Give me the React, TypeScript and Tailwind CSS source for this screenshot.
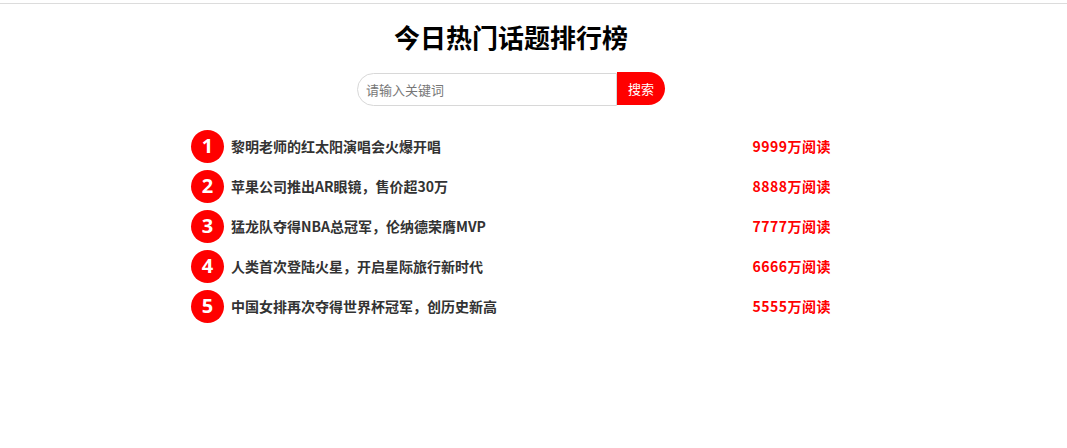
import React from 'react'

const topics = [
  { title: '黎明老师的红太阳演唱会火爆开唱', reads: '9999万阅读' },
  { title: '苹果公司推出AR眼镜，售价超30万', reads: '8888万阅读' },
  { title: '猛龙队夺得NBA总冠军，伦纳德荣膺MVP', reads: '7777万阅读' },
  { title: '人类首次登陆火星，开启星际旅行新时代', reads: '6666万阅读' },
  { title: '中国女排再次夺得世界杯冠军，创历史新高', reads: '5555万阅读' },
]

export default function App() {
  return (
    <div className="min-h-screen bg-white font-['Noto_Sans_CJK_SC',sans-serif] text-[#333]">
      <div className="pt-[3px]">
        <div className="border-t border-[#dcdcdc]" />
      </div>
      <div className="w-[1022px]">
        <h1 className="mt-[17px] text-center text-[26px] font-bold leading-8 text-black">
          今日热门话题排行榜
        </h1>
        <form className="mt-[20px] flex justify-center items-start" onSubmit={(e) => e.preventDefault()}>
          <input
            className="h-[33px] w-[260px] rounded-l-full border border-[#d8d8d8] px-2 text-[13px] outline-none placeholder:text-[#777]"
            placeholder="请输入关键词"
          />
          <button
            type="submit"
            className="-mt-px h-[33px] w-[48px] rounded-r-full bg-[#ff0000] text-[13px] text-white"
          >
            搜索
          </button>
        </form>
        <ul className="mx-auto mt-[20px] w-[640px]">
          {topics.map((t, i) => (
            <li key={i} className="flex h-10 items-center">
              <span className="flex h-[33px] w-[33px] items-center justify-center rounded-full bg-[#ff0000] font-['Open_Sans',sans-serif] text-[20px] font-bold text-white">
                {i + 1}
              </span>
              <span className="ml-[7px] flex-1 text-[14px] font-bold">{t.title}</span>
              <span className="text-[14px] font-bold tracking-[0.5px] text-[#ff0000]">{t.reads}</span>
            </li>
          ))}
        </ul>
      </div>
    </div>
  )
}
